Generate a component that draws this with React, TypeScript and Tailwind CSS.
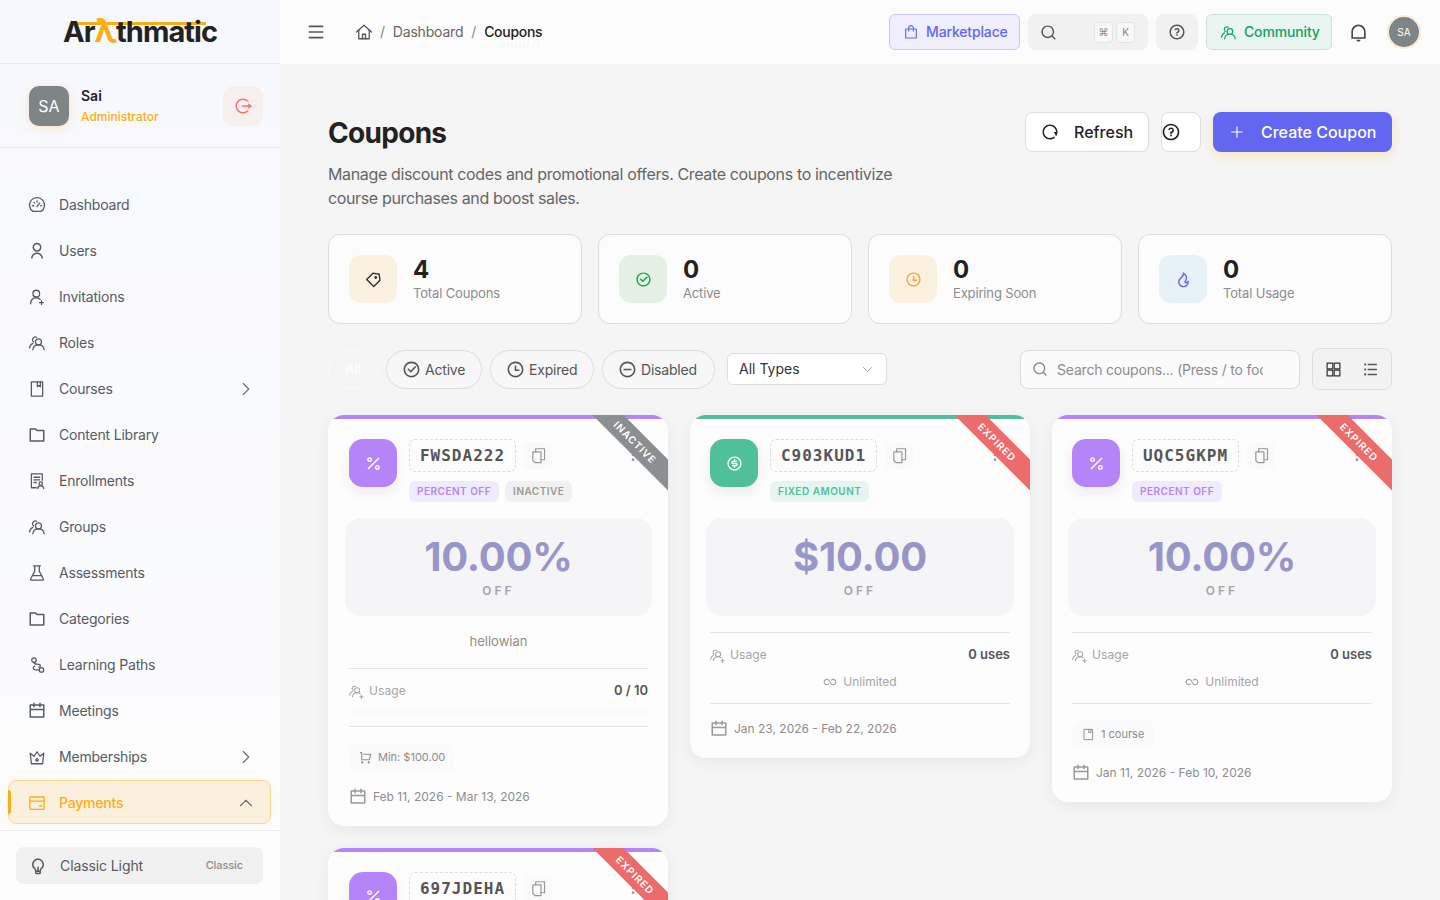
import type { ReactNode } from "react";
import { ChevronDown, ChevronRight, ChevronUp, EllipsisVertical, Plus } from "lucide-react";
import {
  RiCalendarLine,
  RiCheckboxCircleLine,
  RiFireLine,
  RiFolderLine,
  RiIndeterminateCircleLine,
  RiInfinityLine,
  RiLightbulbLine,
  RiListUnordered,
  RiLogoutCircleRLine,
  RiMenuLine,
  RiMoneyDollarCircleLine,
  RiNotificationLine,
  RiPercentLine,
  RiPriceTag3Line,
  RiQuestionLine,
  RiRestartLine,
  RiSearchLine,
  RiShoppingCartLine,
  RiTimeLine,
  RiUserLine,
} from "react-icons/ri";

type GlyphProps = { size?: number; className?: string };
type Glyph = (props: GlyphProps) => ReactNode;

function Line({ size = 18, className, children }: GlyphProps & { children: ReactNode }) {
  return (
    <svg
      width={size}
      height={size}
      viewBox="0 0 24 24"
      fill="none"
      stroke="currentColor"
      strokeWidth={1.7}
      strokeLinecap="round"
      strokeLinejoin="round"
      className={className}
    >
      {children}
    </svg>
  );
}

const GaugeIcon: Glyph = (p) => (
  <Line {...p}>
    <path d="M6.5 20.5a10 10 0 1 1 11 0z" />
    <path d="M12 14l3.5-4.5M6 13h1.5M17 13h1M8 8.5l1 1M12 6.5v1.5" />
  </Line>
);
const PeopleIcon: Glyph = (p) => (
  <Line {...p}>
    <circle cx="14" cy="10.5" r="4" />
    <path d="M6.5 21c.3-4 3.5-6.5 7.5-6.5s7.2 2.5 7.5 6.5" />
    <path d="M11.5 4.3A4 4 0 0 0 6 7.5c0 1.3.5 2.3 1.5 3" />
    <path d="M6.5 12.5C4 13.5 2.5 15.5 2 18.5" />
  </Line>
);
const PeoplePlusIcon: Glyph = (p) => (
  <Line {...p}>
    <circle cx="13" cy="10" r="4" />
    <path d="M5.5 20.5c.3-4 3.5-6.5 7.5-6.5 2 0 3.8.6 5 1.8" />
    <path d="M10.5 3.8A4 4 0 0 0 5 7c0 1.3.5 2.3 1.5 3" />
    <path d="M5.5 12C3 13 1.5 15 1 18" />
    <path d="M20 18v5M17.5 20.5h5" />
  </Line>
);
const PersonPlusIcon: Glyph = (p) => (
  <Line {...p}>
    <circle cx="11" cy="7.5" r="4.5" />
    <path d="M3.5 21c.3-5 3.5-8 7.5-8 2 0 3.6.7 5 2" />
    <path d="M18 17v5M15.5 19.5h5" />
  </Line>
);
const BookIcon: Glyph = (p) => (
  <Line {...p}>
    <path d="M4.5 2.5h15v19h-15z" />
    <path d="M12.5 2.5V9l2-1.5L16.5 9V2.5" />
  </Line>
);
const EnrollIcon: Glyph = (p) => (
  <Line {...p}>
    <path d="M19 11V2.5H4.5V21H11" />
    <path d="M8 7h7.5M8 10.5h7.5M8 14h3" />
    <circle cx="17" cy="15.5" r="2.3" />
    <path d="M13 22c.3-2.5 2-3.5 4-3.5s3.7 1 4 3.5" />
  </Line>
);
const FlaskIcon: Glyph = (p) => (
  <Line {...p}>
    <path d="M7.5 2.5h9M9 2.5v7L3.5 20a1 1 0 0 0 1 1.5h15a1 1 0 0 0 1-1.5L15 9.5v-7" />
    <path d="M6.5 15.5h11" />
  </Line>
);
const PathIcon: Glyph = (p) => (
  <Line {...p}>
    <circle cx="8" cy="5.5" r="3" />
    <circle cx="18" cy="18.5" r="3" />
    <path d="M8 8.5c0 4 8.5 1 8.5 4.5 0 1.5-1.5 2-2 2" />
    <path d="M15 18.5H9.5c-3 0-3.5-4-.5-5" />
  </Line>
);
const CrownIcon: Glyph = (p) => (
  <Line {...p}>
    <path d="M3 7l5 4 4-6 4 6 5-4-1.5 14h-15z" />
    <path d="M10.5 15.5L12 14l1.5 1.5V17h-3z" />
  </Line>
);
const CardIcon: Glyph = (p) => (
  <Line {...p}>
    <rect x="2.5" y="4" width="19" height="16.5" rx="1" />
    <path d="M2.5 9.5h19M15 16h3.5" />
  </Line>
);
const HomeIcon: Glyph = (p) => (
  <Line {...p}>
    <path d="M2 12l10-9 10 9" />
    <path d="M5 9.5V21h14V9.5" />
    <path d="M10 21v-6h4v6" />
  </Line>
);
const BagIcon: Glyph = (p) => (
  <Line {...p}>
    <path d="M4 7.5h16V21H4z" />
    <path d="M8.5 10.5V6a3.5 3.5 0 0 1 7 0v4.5" />
  </Line>
);
const GridIcon: Glyph = (p) => (
  <Line {...p}>
    <rect x="3" y="3" width="8" height="8" />
    <rect x="13" y="3" width="8" height="8" />
    <rect x="3" y="13" width="8" height="8" />
    <rect x="13" y="13" width="8" height="8" />
  </Line>
);
const CopyIcon: Glyph = (p) => (
  <Line {...p}>
    <path d="M4 7h11.5v15H7l-3-3z" />
    <path d="M8 7V2.5h12.5V18h-5" />
  </Line>
);

const NAV: { label: string; icon: Glyph; chevron?: boolean }[] = [
  { label: "Dashboard", icon: GaugeIcon },
  { label: "Users", icon: RiUserLine },
  { label: "Invitations", icon: PersonPlusIcon },
  { label: "Roles", icon: PeopleIcon },
  { label: "Courses", icon: BookIcon, chevron: true },
  { label: "Content Library", icon: RiFolderLine },
  { label: "Enrollments", icon: EnrollIcon },
  { label: "Groups", icon: PeopleIcon },
  { label: "Assessments", icon: FlaskIcon },
  { label: "Categories", icon: RiFolderLine },
  { label: "Learning Paths", icon: PathIcon },
  { label: "Meetings", icon: RiCalendarLine },
  { label: "Memberships", icon: CrownIcon, chevron: true },
];

const STATS: { value: string; label: string; icon: Glyph; box: string; tint: string }[] = [
  { value: "4", label: "Total Coupons", icon: RiPriceTag3Line, box: "bg-[#faf1e1]", tint: "text-[#333333]" },
  { value: "0", label: "Active", icon: RiCheckboxCircleLine, box: "bg-[#e6f1e5]", tint: "text-[#16a34a]" },
  { value: "0", label: "Expiring Soon", icon: RiTimeLine, box: "bg-[#faf1e1]", tint: "text-[#f9a825]" },
  { value: "0", label: "Total Usage", icon: RiFireLine, box: "bg-[#e6f1f8]", tint: "text-[#6366f1]" },
];

function Sidebar() {
  return (
    <aside className="flex h-full w-[280px] shrink-0 flex-col bg-gradient-to-b from-[#f7f8fd] to-[#fdfdfd]">
      <div className="flex h-[64px] shrink-0 items-center justify-center border-b border-[#e9e9ee] pb-[2px]">
        <div className="relative text-[29px] leading-none font-bold tracking-[-0.95px] text-[#222222]">
          <span className="absolute top-[8px] right-[11px] left-[12px] h-[3px] bg-[#fbad13]" />
          <span className="relative">Ar</span>
          <span className="relative text-[33px] leading-none text-[#fbad13]">λ</span>
          <span className="relative">thmatic</span>
        </div>
      </div>
      <div className="flex h-[84px] shrink-0 items-center border-b border-[#e9e9ee] pr-[17px] pl-[29px]">
        <div className="flex h-10 w-10 items-center justify-center rounded-[10px] bg-[#7f8487] text-base text-white shadow-[0_2px_8px_rgba(251,173,19,0.25)]">
          SA
        </div>
        <div className="ml-3 flex-1 pt-[2px]">
          <div className="text-sm leading-5 font-semibold text-[#222222]">Sai</div>
          <div className="mt-[1px] text-xs leading-5 font-medium text-[#fbad13]">Administrator</div>
        </div>
        <button className="flex h-10 w-10 items-center justify-center rounded-[10px] bg-[#f7f0ef] text-[#f87171]">
          <RiLogoutCircleRLine size={18} />
        </button>
      </div>
      <nav className="flex flex-1 flex-col gap-[2px] overflow-hidden pt-[35px] pr-[9px] pl-2">
        {NAV.map((item) => (
          <div
            key={item.label}
            className="flex h-[44px] shrink-0 items-center pr-[14px] pl-5 text-sm tracking-[-0.2px] text-[#565b61]"
          >
            <item.icon size={18} className="mr-[13px] shrink-0" />
            <span className="flex-1">{item.label}</span>
            {item.chevron && <ChevronRight size={22} strokeWidth={1.25} className="text-[#6b7075]" />}
          </div>
        ))}
        <div className="relative -mt-px flex h-[44px] shrink-0 items-center rounded-lg border border-[#fdd98f] bg-[#fbf0de] pt-[2px] pr-[13px] pl-[19px] text-sm font-medium tracking-[-0.2px] text-[#fbad13] shadow-[0_0_10px_rgba(251,173,19,0.08)]">
          <span className="absolute top-[9px] -left-px h-6 w-[3px] rounded-r bg-[#fbad13]" />
          <CardIcon size={18} className="mr-[13px] shrink-0" />
          <span className="flex-1">Payments</span>
          <ChevronUp size={22} strokeWidth={1.25} className="text-[#6b7075]" />
        </div>
      </nav>
      <div className="flex h-[70px] shrink-0 items-start border-t border-[#ececec] px-4 pt-4">
        <div className="flex h-[37px] w-[247px] items-center rounded-lg bg-[#f1f1f1] pr-5 pl-[13px] text-sm tracking-[-0.1px] text-[#565b61]">
          <RiLightbulbLine size={18} className="mr-[13px] shrink-0" />
          <span className="flex-1">Classic Light</span>
          <span className="text-[11px] font-medium text-[#8d8d8d]">Classic</span>
        </div>
      </div>
    </aside>
  );
}

function Topbar() {
  return (
    <header className="flex h-[64px] shrink-0 items-center bg-[#fcfcfc] pr-[21px] pl-[28px]">
      <RiMenuLine size={16} className="scale-[1.2] text-[#555555]" />
      <div className="ml-[31px] flex items-center text-sm tracking-[-0.2px] text-[#666666]">
        <HomeIcon size={18} className="text-[#555555]" />
        <span className="mr-[8px] ml-[7px] text-[#888888]">/</span>
        <span>Dashboard</span>
        <span className="mx-[8px] text-[#888888]">/</span>
        <span className="font-medium tracking-[-0.3px] text-[#222222]">Coupons</span>
      </div>
      <div className="ml-auto flex items-center">
        <div className="flex h-9 w-[131px] items-center rounded-md border border-[#c9c7f8] bg-[#efeefd] pl-[13px] text-sm font-medium tracking-[-0.15px] text-[#6366f1]">
          <BagIcon size={16} className="mr-[7px]" />
          Marketplace
        </div>
        <div className="ml-2 flex h-9 w-[120px] items-center rounded-lg bg-[#f1f1f1] pl-[12px] text-[#555555]">
          <RiSearchLine size={17} />
          <span className="ml-[37px] flex h-[21px] w-[19px] items-center justify-center rounded border border-[#e5e5e5] bg-[#f8f8f8] text-[10px] text-[#888888]">
            ⌘
          </span>
          <span className="ml-[3px] flex h-[21px] w-[19px] items-center justify-center rounded border border-[#e5e5e5] bg-[#f8f8f8] text-[10px] text-[#888888]">
            K
          </span>
        </div>
        <div className="ml-2 flex h-9 w-[42px] items-center justify-center rounded-lg bg-[#f1f1f1] text-[#555555]">
          <RiQuestionLine size={18} />
        </div>
        <div className="ml-2 flex h-9 w-[126px] items-center rounded-md border border-[#cfe0da] bg-[#e9f5f0] pl-[13px] text-sm font-medium tracking-[-0.15px] text-[#16a065]">
          <PeopleIcon size={17} className="mr-[7px]" />
          Community
        </div>
        <RiNotificationLine size={19} className="ml-[17px] text-[#444444]" />
        <div className="ml-[21px] flex h-[30px] w-[30px] items-center justify-center rounded-full bg-[#7f8487] text-[10px] text-white ring-2 ring-[#f8ecd8]">
          SA
        </div>
      </div>
    </header>
  );
}

function PageHeader() {
  return (
    <div className="flex items-start justify-between">
      <div>
        <h1 className="mt-[4px] text-[28px] leading-[34px] font-bold tracking-[-0.7px] text-[#222222]">Coupons</h1>
        <p className="mt-[12px] w-[600px] text-base leading-6 tracking-[-0.36px] text-[#666666]">
          Manage discount codes and promotional offers. Create coupons to incentivize course purchases and boost sales.
        </p>
      </div>
      <div className="flex items-center">
        <button className="flex h-10 w-[124px] items-center rounded-lg border border-[#dddddd] bg-white pb-px pl-[15px] text-base font-medium text-[#222222]">
          <RiRestartLine size={18} className="mr-[15px]" />
          Refresh
        </button>
        <button className="ml-3 flex h-10 w-10 items-center rounded-lg border border-[#dddddd] bg-white text-[#222222]">
          <RiQuestionLine size={20} className="-ml-[1px]" />
        </button>
        <button className="ml-3 flex h-10 w-[179px] items-center rounded-lg bg-[#6366f1] pb-px pl-[15px] text-base font-medium text-white shadow-[0_4px_12px_rgba(251,173,19,0.22)]">
          <Plus size={18} strokeWidth={1.5} className="mr-[15px]" />
          Create Coupon
        </button>
      </div>
    </div>
  );
}

function Stats() {
  return (
    <div className="mt-6 grid grid-cols-4 gap-4">
      {STATS.map((s) => (
        <div key={s.label} className="flex h-[90px] items-center rounded-xl border border-[#dcdcdc] bg-[#fcfcfc] px-5">
          <div className={`flex h-12 w-12 items-center justify-center rounded-xl ${s.box} ${s.tint}`}>
            <s.icon size={17} />
          </div>
          <div className="ml-4 pt-px">
            <div className="text-2xl leading-7 font-bold text-[#222222]">{s.value}</div>
            <div className="-mt-px text-[13px] leading-5 tracking-[-0.15px] text-[#8d8d8d]">{s.label}</div>
          </div>
        </div>
      ))}
    </div>
  );
}

function Pill({ icon: Icon, label, width }: { icon: Glyph; label: string; width: string }) {
  return (
    <button
      className={`flex h-[39px] items-center gap-[4px] rounded-full border border-[#dddddd] bg-[#f7f7f7] pl-[15px] text-sm tracking-[-0.2px] text-[#555555] ${width}`}
    >
      <Icon size={19} />
      <span className="pt-px">{label}</span>
    </button>
  );
}

function Filters() {
  return (
    <div className="mt-6 flex h-[42px] items-center">
      <div className="flex items-center gap-2">
        <button className="flex h-[39px] w-[50px] items-center justify-center rounded-full border border-[#fbfbfb] text-sm text-white">
          All
        </button>
        <Pill icon={RiCheckboxCircleLine} label="Active" width="w-[96px]" />
        <Pill icon={RiTimeLine} label="Expired" width="w-[104px]" />
        <Pill icon={RiIndeterminateCircleLine} label="Disabled" width="w-[113px]" />
      </div>
      <div className="ml-3 flex h-8 w-40 items-center justify-between rounded-md border border-[#dddddd] bg-white pr-[10px] pl-[11px] text-sm text-[#333333]">
        All Types
        <ChevronDown size={17} strokeWidth={1.25} className="text-[#999999]" />
      </div>
      <div className="ml-auto flex h-[39px] w-[280px] items-center rounded-lg border border-[#dddddd] bg-[#fbfbfb] pr-9 pl-[11px]">
        <RiSearchLine size={16} className="shrink-0 text-[#888888]" />
        <input
          readOnly
          placeholder="Search coupons... (Press / to focus)"
          className="ml-[9px] w-full min-w-0 bg-transparent pt-px text-sm tracking-[-0.2px] outline-none placeholder:text-[#8d8d8d]"
        />
      </div>
      <div className="ml-3 flex h-[42px] w-20 items-center justify-between rounded-lg border border-[#dddddd] bg-[#f2f2f2] px-[12px] text-[#555555]">
        <GridIcon size={17} className="text-[#333333]" />
        <RiListUnordered size={17} />
      </div>
    </div>
  );
}

type CouponProps = {
  code: string;
  fixed?: boolean;
  inactive?: boolean;
  ribbon: "INACTIVE" | "EXPIRED";
  value?: string;
  inset?: string;
  children?: ReactNode;
};

function Coupon({ code, fixed, inactive, ribbon, value, inset = "pl-5", children }: CouponProps) {
  const TileIcon = fixed ? RiMoneyDollarCircleLine : RiPercentLine;
  return (
    <div className="relative overflow-hidden rounded-2xl bg-[#fdfdfd] shadow-[0_4px_16px_rgba(0,0,0,0.06)]">
      <div className={`h-1 ${fixed ? "bg-[#4fc09a]" : "bg-[#b484f8]"}`} />
      <EllipsisVertical size={16} className="absolute top-[32px] right-[27px] text-[#999999]" />
      <div className="absolute top-0 right-0 h-[100px] w-[100px] overflow-hidden">
        <div
          className={`absolute top-[19px] left-0 flex h-[22px] w-[140px] rotate-45 items-center justify-center pr-[8px] text-[10px] font-semibold tracking-[1px] text-white ${
            ribbon === "EXPIRED" ? "bg-[#ec6b6b]" : "bg-[#8b8f92]"
          }`}
        >
          {ribbon}
        </div>
      </div>
      <div className={`pt-5 pr-5 pb-[19px] ${inset}`}>
        <div className="flex">
          <div
            className={`flex h-12 w-12 shrink-0 items-center justify-center rounded-[14px] text-white shadow-[0_6px_14px_rgba(0,0,0,0.07)] ${
              fixed ? "bg-[#4fc09a]" : "bg-[#b484f8]"
            }`}
          >
            <TileIcon size={17} />
          </div>
          <div className="ml-3">
            <div className="flex items-center">
              <div className="flex h-[33px] w-[107px] items-center justify-center rounded-md border border-dashed border-[#dddddd] bg-[#fcfcfc] font-['DejaVu_Sans_Mono',monospace] text-base font-bold tracking-[1px] text-[#555555]">
                {code}
              </div>
              <div className="ml-2 flex h-7 w-7 items-center justify-center rounded-md bg-[#fafafa] text-[#999999]">
                <CopyIcon size={17} />
              </div>
            </div>
            {value && (
              <div className="mt-[9px] flex gap-[6px]">
                <span
                  className={`flex h-[21px] items-center rounded-md px-2 text-[10px] font-semibold tracking-[0.5px] ${
                    fixed ? "bg-[#e6f5ef] text-[#4fc09a]" : "bg-[#f0ebfc] text-[#b484f8]"
                  }`}
                >
                  {fixed ? "FIXED AMOUNT" : "PERCENT OFF"}
                </span>
                {inactive && (
                  <span className="flex h-[21px] items-center rounded-md bg-[#f1f1f1] px-2 text-[10px] font-semibold tracking-[0.5px] text-[#999999]">
                    INACTIVE
                  </span>
                )}
              </div>
            )}
          </div>
        </div>
        {value && (
          <div className="mt-4 -mr-1 -ml-1 flex h-[98px] flex-col items-center rounded-2xl bg-[#f5f5f7] pt-[15px]">
            <div className="text-[40px] leading-[48px] font-bold tracking-[-0.2px] text-[#9896c8]">{value}</div>
            <div className="mt-[2px] text-xs leading-4 font-semibold tracking-[3px] text-[#a5a5a5]">OFF</div>
          </div>
        )}
        {children}
      </div>
    </div>
  );
}

function UsageRow({ amount }: { amount: string }) {
  return (
    <div className="mt-3 flex h-5 items-center justify-between">
      <span className="flex items-center gap-[5px] text-xs tracking-[0.1px] text-[#a5a5a5]">
        <PeoplePlusIcon size={15} />
        Usage
      </span>
      <span className="text-[13px] font-semibold text-[#555555]">{amount}</span>
    </div>
  );
}

function Unlimited() {
  return (
    <div className="mt-[7px] flex h-5 items-center justify-center gap-[6px] text-xs text-[#a5a5a5]">
      <RiInfinityLine size={14} />
      Unlimited
    </div>
  );
}

function DateRow({ label, top }: { label: string; top: string }) {
  return (
    <div className={`flex h-5 items-center gap-[6px] text-xs text-[#8d8d8d] ${top}`}>
      <RiCalendarLine size={18} className="text-[#999999]" />
      {label}
    </div>
  );
}

function Chip({ icon: Icon, label }: { icon: Glyph; label: string }) {
  return (
    <div className="mt-4 flex h-7 w-fit items-center gap-[6px] rounded-lg bg-[#fafafa] px-[10px] text-[11px] text-[#8d8d8d]">
      <Icon size={13} />
      {label}
    </div>
  );
}

function Divider({ top }: { top: string }) {
  return <div className={`h-px bg-[#e5e5e5] ${top}`} />;
}

export default function App() {
  return (
    <div className="flex h-screen w-full overflow-hidden bg-[#f5f5f5] font-['Inter',sans-serif]">
      <Sidebar />
      <div className="flex min-w-0 flex-1 flex-col">
        <Topbar />
        <main className="flex-1 overflow-hidden px-12 pt-12">
          <PageHeader />
          <Stats />
          <Filters />
          <div className="mt-[25px] flex gap-[22px]">
            <div className="flex w-[340px] flex-col gap-[22px]">
              <Coupon code="FWSDA222" inactive ribbon="INACTIVE" value="10.00%" inset="pl-[21px]">
                <div className="mt-[15px] text-center text-[13px] leading-5 text-[#8d8d8d]">hellowian</div>
                <Divider top="mt-[17px]" />
                <UsageRow amount="0 / 10" />
                <div className="mt-2 h-[6px] rounded bg-[#fafafa]" />
                <Divider top="mt-[11px]" />
                <Chip icon={RiShoppingCartLine} label="Min: $100.00" />
                <DateRow label="Feb 11, 2026 - Mar 13, 2026" top="mt-4" />
              </Coupon>
              <Coupon code="697JDEHA" ribbon="EXPIRED" inset="pl-[21px]" />
            </div>
            <div className="w-[340px]">
              <Coupon code="C903KUD1" fixed ribbon="EXPIRED" value="$10.00">
                <Divider top="mt-4" />
                <UsageRow amount="0 uses" />
                <Unlimited />
                <Divider top="mt-[11px]" />
                <DateRow label="Jan 23, 2026 - Feb 22, 2026" top="mt-[15px]" />
              </Coupon>
            </div>
            <div className="w-[340px]">
              <Coupon code="UQC5GKPM" ribbon="EXPIRED" value="10.00%">
                <Divider top="mt-4" />
                <UsageRow amount="0 uses" />
                <Unlimited />
                <Divider top="mt-[11px]" />
                <Chip icon={BookIcon} label="1 course" />
                <DateRow label="Jan 11, 2026 - Feb 10, 2026" top="mt-[15px]" />
              </Coupon>
            </div>
          </div>
        </main>
      </div>
    </div>
  );
}
